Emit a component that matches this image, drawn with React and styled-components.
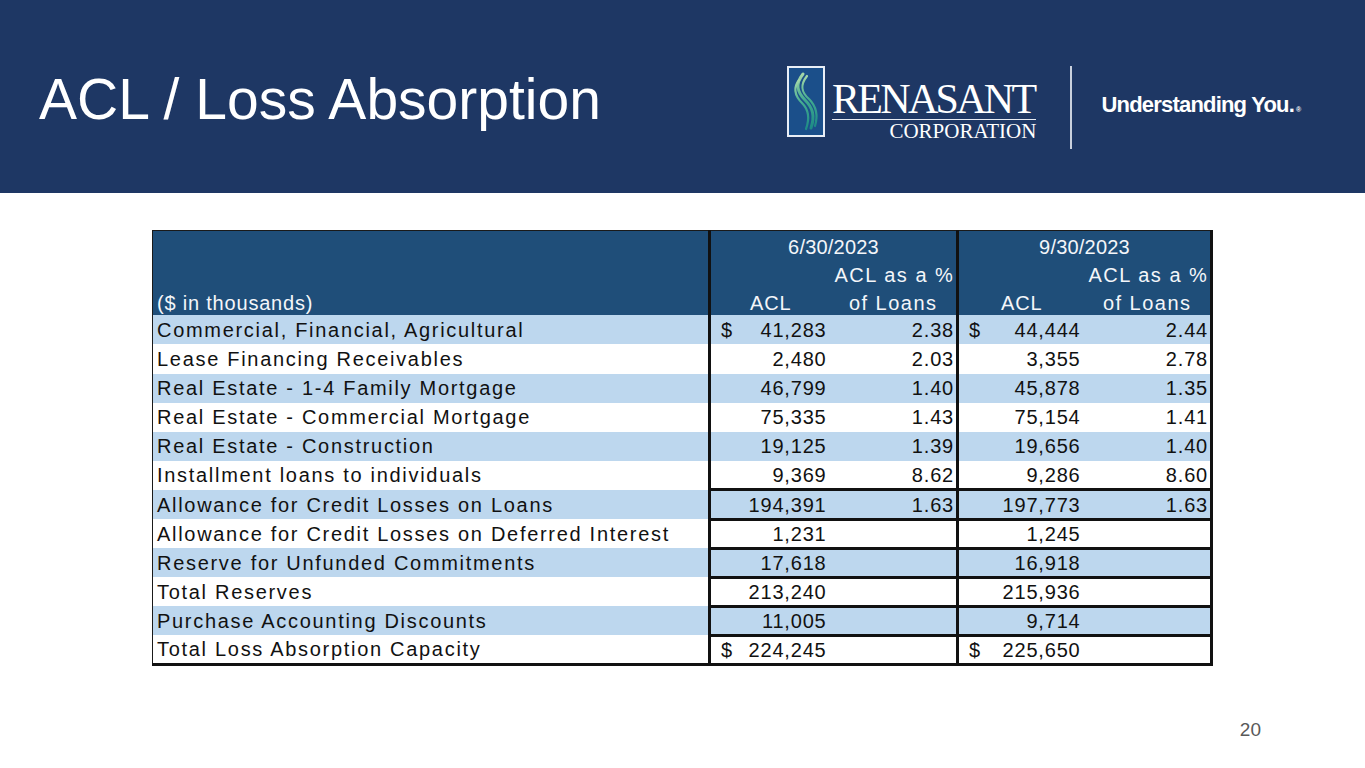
import React from "react";
import styled, { createGlobalStyle } from "styled-components";

const GlobalStyle = createGlobalStyle`
  html, body {
    margin: 0;
    padding: 0;
    background: #fff;
  }
  body {
    font-family: "Liberation Sans", Arial, sans-serif;
  }
`;

const Slide = styled.div`
  width: 1365px;
  height: 768px;
  overflow: hidden;
  background: #fff;
  display: flex;
  flex-direction: column;
`;

const Banner = styled.header`
  height: 193px;
  flex: none;
  background: #1e3764;
  display: flex;
  align-items: flex-start;
  padding-left: 39px;
  box-sizing: border-box;
`;

const Title = styled.h1`
  margin: 71px 0 0;
  font-size: 57px;
  line-height: 1;
  font-weight: 400;
  color: #fff;
  width: 748px;
  white-space: nowrap;
`;

const Logo = styled.div`
  display: flex;
  align-items: flex-start;
  margin-top: 66px;
`;

const Emblem = styled.svg`
  width: 38px;
  height: 71px;
  flex: none;
`;

const Wordmark = styled.div`
  margin-left: 7px;
  margin-top: 14px;
  display: flex;
  flex-direction: column;
  align-items: flex-end;
  font-family: "Liberation Serif", "Times New Roman", serif;
  color: #fff;
`;

const BrandName = styled.div`
  font-size: 42px;
  line-height: 39px;
  letter-spacing: -2.7px;
  padding-right: 2px;
  border-bottom: 1.5px solid #e8ecf4;
  white-space: nowrap;
`;

const BrandSub = styled.div`
  font-size: 21px;
  line-height: 20px;
  margin-top: 1px;
  white-space: nowrap;
`;

const Divider = styled.div`
  width: 2px;
  height: 83px;
  background: #c9d0dd;
  margin-left: 34px;
`;

const Tagline = styled.div`
  margin-left: 29px;
  margin-top: 26px;
  font-size: 22px;
  font-weight: 700;
  letter-spacing: -0.8px;
  color: #fff;
  white-space: nowrap;
  sup {
    font-size: 7px;
    letter-spacing: 0;
    vertical-align: 0;
    margin-left: 2px;
  }
`;

const Body = styled.main`
  flex: 1;
  padding: 37px 0 0 152px;
  display: flex;
  flex-direction: column;
`;

const Grid = styled.table`
  width: 1059px;
  table-layout: fixed;
  border-collapse: collapse;
  font-size: 20px;
  letter-spacing: 0.8px;
  color: #111;
  border-top: 1px solid #1a1a1a;
  border-left: 1px solid #1a1a1a;
  border-right: 3px solid #111;
  border-bottom: 3px solid #111;
`;

const HeadRow = styled.tr`
  height: 28.3px;
  background: #1f4e79;
`;

const BodyRow = styled.tr`
  height: 29.1px;
  background: ${(p) => (p.$shade ? "#bdd7ee" : "#fff")};
`;

const HeadCell = styled.th`
  padding: 0 ${(p) => (p.$align === "right" ? "2px" : "4px")} 0 4px;
  font-weight: 400;
  color: #f4f6f9;
  text-align: ${(p) => p.$align || "center"};
  vertical-align: bottom;
  white-space: nowrap;
  line-height: 24px;
  letter-spacing: ${(p) => (p.$wide ? "1.5px" : p.$date ? "0.2px" : "0.8px")};
  border-left: ${(p) => (p.$sep ? "3px solid #111" : "none")};
`;

const Label = styled.td`
  padding: 0 4px;
  white-space: nowrap;
  line-height: 24px;
  letter-spacing: 1.7px;
`;

const Value = styled.td`
  padding: 0 ${(p) => (p.$pct ? "2px" : "4px")} 0 10px;
  white-space: nowrap;
  text-align: right;
  line-height: 24px;
  border-left: ${(p) => (p.$sep ? "3px solid #111" : "none")};
  border-top: ${(p) => (p.$boxed ? "3px solid #111" : "none")};
`;

const Money = styled.span`
  display: flex;
  justify-content: space-between;
`;

const Footer = styled.div`
  margin-top: auto;
  height: 49px;
  padding-right: 104px;
  display: flex;
  justify-content: flex-end;
  font-size: 19px;
  color: #595959;
`;

const rows = [
  ["Commercial, Financial, Agricultural", "41,283", "2.38", "44,444", "2.44", true],
  ["Lease Financing Receivables", "2,480", "2.03", "3,355", "2.78"],
  ["Real Estate - 1-4 Family Mortgage", "46,799", "1.40", "45,878", "1.35"],
  ["Real Estate - Commercial Mortgage", "75,335", "1.43", "75,154", "1.41"],
  ["Real Estate - Construction", "19,125", "1.39", "19,656", "1.40"],
  ["Installment loans to individuals", "9,369", "8.62", "9,286", "8.60"],
  ["Allowance for Credit Losses on Loans", "194,391", "1.63", "197,773", "1.63", false, true],
  ["Allowance for Credit Losses on Deferred Interest", "1,231", "", "1,245", "", false, true],
  ["Reserve for Unfunded Commitments", "17,618", "", "16,918", "", false, true],
  ["Total Reserves", "213,240", "", "215,936", "", false, true],
  ["Purchase Accounting Discounts", "11,005", "", "9,714", "", false, true],
  ["Total Loss Absorption Capacity", "224,245", "", "225,650", "", true, true],
];

function Amount({ value, dollar }) {
  if (!dollar) return value;
  return (
    <Money>
      <span>$</span>
      <span>{value}</span>
    </Money>
  );
}

function RenasantEmblem() {
  return (
    <Emblem viewBox="0 0 38 71">
      <defs>
        <linearGradient id="swoosh" x1="0" y1="0" x2="0" y2="1">
          <stop offset="0" stopColor="#a5d8a8" />
          <stop offset="0.5" stopColor="#3fa98f" />
          <stop offset="1" stopColor="#1d8a86" />
        </linearGradient>
      </defs>
      <rect x="1" y="1" width="36" height="69" fill="#1b4f8a" stroke="#e9eef6" strokeWidth="2" />
      <g fill="none" stroke="url(#swoosh)" strokeLinecap="round">
        <path d="M16 8 C8 18 10 26 18 34 C26 42 28 50 24 62" strokeWidth="3" />
        <path d="M20 10 C13 19 14 26 22 33 C29 40 31 50 28 60" strokeWidth="2.2" />
        <path d="M12 14 C6 22 8 30 15 37 C22 44 23 52 19 63" strokeWidth="2.2" />
      </g>
    </Emblem>
  );
}

export default function App() {
  return (
    <>
      <GlobalStyle />
      <Slide>
        <Banner>
          <Title>ACL / Loss Absorption</Title>
          <Logo>
            <RenasantEmblem />
            <Wordmark>
              <BrandName>RENASANT</BrandName>
              <BrandSub>CORPORATION</BrandSub>
            </Wordmark>
            <Divider />
            <Tagline>
              Understanding You.<sup>®</sup>
            </Tagline>
          </Logo>
        </Banner>
        <Body>
          <Grid>
            <colgroup>
              <col style={{ width: 557 }} />
              <col style={{ width: 121 }} />
              <col style={{ width: 127 }} />
              <col style={{ width: 127 }} />
              <col style={{ width: 127 }} />
            </colgroup>
            <thead>
              <HeadRow>
                <HeadCell rowSpan={3} $align="left">
                  ($ in thousands)
                </HeadCell>
                <HeadCell colSpan={2} $sep $date>
                  6/30/2023
                </HeadCell>
                <HeadCell colSpan={2} $sep $date>
                  9/30/2023
                </HeadCell>
              </HeadRow>
              <HeadRow>
                <HeadCell $sep />
                <HeadCell $align="right" $wide>
                  ACL as a %
                </HeadCell>
                <HeadCell $sep />
                <HeadCell $align="right" $wide>
                  ACL as a %
                </HeadCell>
              </HeadRow>
              <HeadRow>
                <HeadCell $sep>ACL</HeadCell>
                <HeadCell $wide>of Loans</HeadCell>
                <HeadCell $sep>ACL</HeadCell>
                <HeadCell $wide>of Loans</HeadCell>
              </HeadRow>
            </thead>
            <tbody>
              {rows.map(([label, a1, p1, a2, p2, dollar, boxed], i) => (
                <BodyRow key={label} $shade={i % 2 === 0}>
                  <Label>{label}</Label>
                  <Value $sep $boxed={boxed}>
                    <Amount value={a1} dollar={dollar} />
                  </Value>
                  <Value $pct $boxed={boxed}>
                    {p1}
                  </Value>
                  <Value $sep $boxed={boxed}>
                    <Amount value={a2} dollar={dollar} />
                  </Value>
                  <Value $pct $boxed={boxed}>
                    {p2}
                  </Value>
                </BodyRow>
              ))}
            </tbody>
          </Grid>
          <Footer>20</Footer>
        </Body>
      </Slide>
    </>
  );
}
